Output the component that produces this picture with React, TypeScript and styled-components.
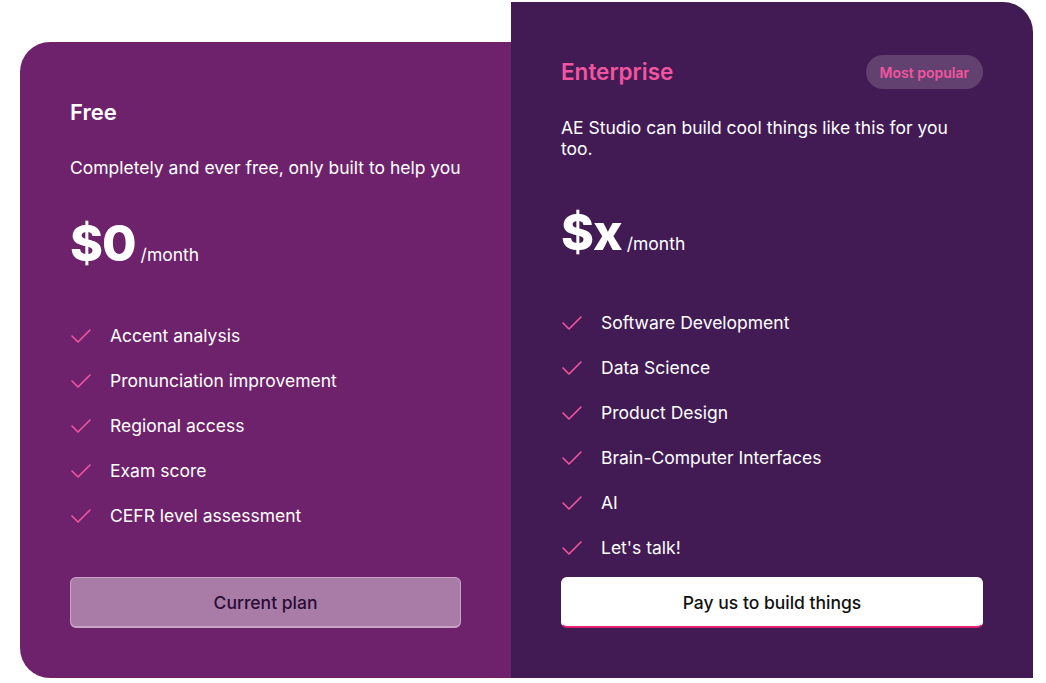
import React from "react";
import styled, { createGlobalStyle } from "styled-components";

const G = createGlobalStyle`
  body { margin: 0; background: #fff; font-family: Inter, "Noto Sans", sans-serif; }
`;

const Page = styled.div`
  display: flex;
  align-items: flex-end;
  padding: 2px 0 0 20px;
  height: 676px;
`;

const Card = styled.div<{ $variant: "free" | "ent" }>`
  box-sizing: border-box;
  display: flex;
  flex-direction: column;
  color: #fff;
  background: ${(p) => (p.$variant === "free" ? "#6f226c" : "#421b55")};
  width: ${(p) => (p.$variant === "free" ? "491px" : "522px")};
  height: ${(p) => (p.$variant === "free" ? "636px" : "676px")};
  border-radius: ${(p) => (p.$variant === "free" ? "30px 0 0 30px" : "0 30px 0 0")};
  padding: ${(p) => (p.$variant === "free" ? "56px 50px 50px 50px" : "53px 50px 50px 50px")};
`;

const Head = styled.div`
  display: flex;
  justify-content: space-between;
  align-items: center;
  height: 34px;
`;

const Title = styled.div<{ $pink?: boolean }>`
  font-size: ${(p) => (p.$pink ? "22.5px" : "22px")};
  line-height: 28px;
  font-weight: 600;
  color: ${(p) => (p.$pink ? "#f2559f" : "#fff")};
`;

const Badge = styled.div`
  background: #62406f;
  color: #f2559f;
  font-size: 14px;
  font-weight: 600;
  border-radius: 17px;
  padding: 0 14px;
  height: 34px;
  display: flex;
  align-items: center;
`;

const Desc = styled.div<{ $gap: number }>`
  font-size: 17.5px;
  margin-top: ${(p) => p.$gap}px;
`;

const Price = styled.div<{ $gap: number }>`
  display: flex;
  align-items: baseline;
  gap: 5px;
  margin-top: ${(p) => p.$gap}px;
`;

const Amount = styled.span`
  font-size: 50px;
  font-weight: 800;
  letter-spacing: -1px;
  line-height: 60px;
`;

const Per = styled.span`
  font-size: 17.5px;
`;

const List = styled.ul<{ $gap: number }>`
  list-style: none;
  margin: ${(p) => p.$gap}px 0 0;
  padding: 0;
  display: flex;
  flex-direction: column;
  gap: 23px;
  flex: 1;
`;

const Item = styled.li`
  display: flex;
  align-items: center;
  gap: 18px;
  font-size: 17.5px;
  line-height: 22px;
`;

const Button = styled.button<{ $primary?: boolean }>`
  height: 51px;
  width: 100%;
  border-radius: 6px;
  font-family: Inter, sans-serif;
  font-size: 17.5px;
  font-weight: 500;
  color: ${(p) => (p.$primary ? "#111" : "#2a0c35")};
  background: ${(p) => (p.$primary ? "#fff" : "#a97ca8")};
  border: 1px solid ${(p) => (p.$primary ? "#fff" : "#c8a4c6")};
  border-bottom: 2px solid ${(p) => (p.$primary ? "#e0226e" : "#c8a4c6")};
`;

const Check = () => (
  <svg width="22" height="18" viewBox="0 0 22 18" fill="none">
    <path d="M2 9l6 6L20 3" stroke="#f2559f" strokeWidth="1.6" strokeLinecap="round" strokeLinejoin="round" />
  </svg>
);

const freeItems = ["Accent analysis", "Pronunciation improvement", "Regional access", "Exam score", "CEFR level assessment"];
const entItems = ["Software Development", "Data Science", "Product Design", "Brain-Computer Interfaces", "AI", "Let's talk!"];

export default function App() {
  return (
    <>
      <G />
      <Page>
        <Card $variant="free">
          <Title>Free</Title>
          <Desc $gap={31}>Completely and ever free, only built to help you</Desc>
          <Price $gap={35}>
            <Amount>$0</Amount>
            <Per>/month</Per>
          </Price>
          <List $gap={52}>
            {freeItems.map((t) => (
              <Item key={t}><Check />{t}</Item>
            ))}
          </List>
          <Button>Current plan</Button>
        </Card>
        <Card $variant="ent">
          <Head>
            <Title $pink>Enterprise</Title>
            <Badge>Most popular</Badge>
          </Head>
          <Desc $gap={28}>AE Studio can build cool things like this for you too.</Desc>
          <Price $gap={43}>
            <Amount>$x</Amount>
            <Per>/month</Per>
          </Price>
          <List $gap={50}>
            {entItems.map((t) => (
              <Item key={t}><Check />{t}</Item>
            ))}
          </List>
          <Button $primary>Pay us to build things</Button>
        </Card>
      </Page>
    </>
  );
}
